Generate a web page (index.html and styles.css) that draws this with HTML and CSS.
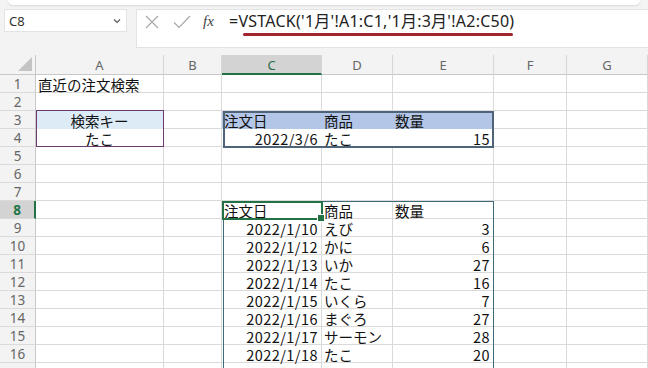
FILE: index.html
```html
<!DOCTYPE html>
<html lang="ja">
<head>
<meta charset="utf-8">
<title>VSTACK</title>
<link rel="stylesheet" href="styles.css">
</head>
<body>
<div class="topstrip"></div>
<div class="fbar">
  <div class="namebox">
    <span class="nbtext">C8</span>
    <svg class="chev" width="8" height="6" viewBox="0 0 8 6"><path d="M1 1.5 L4 4.5 L7 1.5" fill="none" stroke="#555" stroke-width="1.1"/></svg>
  </div>
  <div class="formula">
    <div class="fbtns">
      <svg width="14" height="14" viewBox="0 0 14 14"><path d="M1 1 L13 13 M13 1 L1 13" stroke="#a6a6a6" stroke-width="1.1" fill="none"/></svg>
      <svg width="18" height="14" viewBox="0 0 18 14"><path d="M1 7.5 L6 12.5 L17 1" stroke="#a6a6a6" stroke-width="1.1" fill="none"/></svg>
      <span class="fx">fx</span>
    </div>
    <div class="ftext">=VSTACK('1月'!A1:C1,'1月:3月'!A2:C50)</div>
    <div class="redline"></div>
  </div>
</div>
<div class="sheetwrap">
  <div class="sheet">
    <div class="corner"><span class="tri"></span></div>
    <div class="ch">A</div><div class="ch">B</div><div class="ch sel">C</div><div class="ch">D</div><div class="ch">E</div><div class="ch">F</div><div class="ch">G</div>

    <div class="rh">1</div><div class="c">直近の注文検索</div><div class="c"></div><div class="c"></div><div class="c"></div><div class="c"></div><div class="c"></div><div class="c"></div>
    <div class="rh">2</div><div class="c"></div><div class="c"></div><div class="c"></div><div class="c"></div><div class="c"></div><div class="c"></div><div class="c"></div>
    <div class="rh">3</div><div class="c ctr key">検索キー</div><div class="c"></div><div class="c th">注文日</div><div class="c th">商品</div><div class="c th">数量</div><div class="c"></div><div class="c"></div>
    <div class="rh">4</div><div class="c ctr">たこ</div><div class="c"></div><div class="c r tb">2022/3/6</div><div class="c tb">たこ</div><div class="c r tb">15</div><div class="c"></div><div class="c"></div>
    <div class="rh">5</div><div class="c"></div><div class="c"></div><div class="c"></div><div class="c"></div><div class="c"></div><div class="c"></div><div class="c"></div>
    <div class="rh">6</div><div class="c"></div><div class="c"></div><div class="c"></div><div class="c"></div><div class="c"></div><div class="c"></div><div class="c"></div>
    <div class="rh">7</div><div class="c"></div><div class="c"></div><div class="c"></div><div class="c"></div><div class="c"></div><div class="c"></div><div class="c"></div>
    <div class="rh sel">8</div><div class="c"></div><div class="c"></div><div class="c">注文日</div><div class="c">商品</div><div class="c">数量</div><div class="c"></div><div class="c"></div>
    <div class="rh">9</div><div class="c"></div><div class="c"></div><div class="c r">2022/1/10</div><div class="c">えび</div><div class="c r">3</div><div class="c"></div><div class="c"></div>
    <div class="rh">10</div><div class="c"></div><div class="c"></div><div class="c r">2022/1/12</div><div class="c">かに</div><div class="c r">6</div><div class="c"></div><div class="c"></div>
    <div class="rh">11</div><div class="c"></div><div class="c"></div><div class="c r">2022/1/13</div><div class="c">いか</div><div class="c r">27</div><div class="c"></div><div class="c"></div>
    <div class="rh">12</div><div class="c"></div><div class="c"></div><div class="c r">2022/1/14</div><div class="c">たこ</div><div class="c r">16</div><div class="c"></div><div class="c"></div>
    <div class="rh">13</div><div class="c"></div><div class="c"></div><div class="c r">2022/1/15</div><div class="c">いくら</div><div class="c r">7</div><div class="c"></div><div class="c"></div>
    <div class="rh">14</div><div class="c"></div><div class="c"></div><div class="c r">2022/1/16</div><div class="c">まぐろ</div><div class="c r">27</div><div class="c"></div><div class="c"></div>
    <div class="rh">15</div><div class="c"></div><div class="c"></div><div class="c r">2022/1/17</div><div class="c">サーモン</div><div class="c r">28</div><div class="c"></div><div class="c"></div>
    <div class="rh">16</div><div class="c"></div><div class="c"></div><div class="c r">2022/1/18</div><div class="c">たこ</div><div class="c r">20</div><div class="c"></div><div class="c"></div>
    <div class="rh"></div><div class="c"></div><div class="c"></div><div class="c"></div><div class="c"></div><div class="c"></div><div class="c"></div><div class="c"></div>
  </div>
  <div class="overlay">
    <div class="ov-key"></div>
    <div class="ov-table"></div>
    <div class="ov-spill"></div>
    <div class="ov-sel"></div>
  </div>
</div>
</body>
</html>
```

FILE: styles.css
```css
* { box-sizing: border-box; }
body {
  margin: 0;
  width: 648px;
  height: 368px;
  overflow: hidden;
  background: #f3f3f3;
  font-family: "Noto Sans", "Noto Sans CJK JP", sans-serif;
}
.topstrip {
  height: 5px;
  margin: 0 8px;
  background: #fff;
  border-radius: 0 0 6px 6px;
  box-shadow: 0 1px 2px rgba(0,0,0,0.12);
}
.fbar {
  height: 50px;
  display: flex;
  align-items: flex-start;
  padding: 4px 0 0 4px;
}
.namebox {
  width: 123px;
  height: 23px;
  background: #fff;
  border: 1px solid #e3e3e3;
  display: flex;
  align-items: center;
  justify-content: space-between;
  padding: 0 5px 0 4px;
}
.nbtext {
  font: 13px "Noto Sans", sans-serif;
  color: #333;
}
.formula {
  position: relative;
  margin-left: 9px;
  flex: 1;
  height: 39px;
  background: #fff;
  border: 1px solid #e3e3e3;
  border-right: none;
  display: flex;
  align-items: flex-start;
}
.fbtns {
  height: 23px;
  display: flex;
  align-items: center;
  gap: 14px;
  padding-left: 8px;
  width: 92px;
}
.fx {
  font: italic 15px "Liberation Serif", serif;
  color: #444;
  margin-left: -2px;
}
.ftext {
  font: 16px/23px "Noto Sans", "Noto Sans CJK JP", sans-serif;
  letter-spacing: 0.25px;
  color: #222;
  white-space: nowrap;
}
.redline {
  position: absolute;
  left: 106px;
  top: 23px;
  width: 270px;
  height: 3px;
  border-radius: 2px;
  background: #a3262e;
}
.sheetwrap {
  display: grid;
}
.sheet, .overlay {
  grid-area: 1 / 1;
  display: grid;
  grid-template-columns: 36px 128px 58px 100px 71px 101px 73px 81px;
  grid-template-rows: 20px repeat(17, 18px);
}
.sheet { background: #fff; }
.overlay { pointer-events: none; }
.corner {
  background: #f3f3f3;
  border-right: 1px solid #c8c8c8;
  border-bottom: 1px solid #c8c8c8;
  position: relative;
}
.tri {
  position: absolute;
  right: 3px;
  bottom: 3px;
  width: 0;
  height: 0;
  border-left: 14px solid transparent;
  border-bottom: 14px solid #c4c4c4;
}
.ch {
  background: #f3f3f3;
  border-right: 1px solid #d6d6d6;
  border-bottom: 1px solid #c8c8c8;
  text-align: center;
  font: 13px/20px "Noto Sans", sans-serif;
  color: #666;
}
.ch.sel {
  background: #d3d3d3;
  color: #2b6a48;
  border-bottom: 2px solid #217346;
}
.rh {
  background: #f3f3f3;
  border-right: 1px solid #c8c8c8;
  border-bottom: 1px solid #dadada;
  text-align: center;
  font: 13.5px/15px "Noto Sans", sans-serif;
  padding-top: 2px;
  color: #666;
}
.rh.sel {
  background: #d3d3d3;
  color: #217346;
  font-weight: bold;
  border-right: 2px solid #217346;
}
.c {
  border-right: 1px solid #dadada;
  border-bottom: 1px solid #dadada;
  font: 14.5px/15px "Noto Sans CJK JP", sans-serif;
  padding: 2px 2px 0;
  color: #111;
  white-space: nowrap;
}
.r { text-align: right; padding-right: 3px; letter-spacing: 0.45px; }
.ctr { text-align: center; }
.key { background: #ddebf7; border-bottom-color: #ddebf7; }
.th { background: #b4c6e7; border-color: #b4c6e7; }
.tb { border-right-color: #fff; }
.ov-key {
  grid-column: 2 / 3;
  grid-row: 4 / 6;
  border: 1px solid #6b3a6e;
  margin: -1px 0 0 0;
}
.ov-table {
  grid-column: 4 / 7;
  grid-row: 4 / 6;
  border: 2px solid #4f6479;
  margin: 0 0 -1px 1px;
}
.ov-spill {
  grid-column: 4 / 7;
  grid-row: 9 / 19;
  border: 1px solid #3f6a78;
  margin: 0 0 0 1px;
  border-bottom: none;
}
.ov-sel {
  grid-column: 4 / 5;
  grid-row: 9 / 10;
  border: 2px solid #217346;
  margin: 0 -1px -1px 0;
  position: relative;
}
.ov-sel::after {
  content: "";
  position: absolute;
  right: -4px;
  bottom: -4px;
  width: 6px;
  height: 6px;
  background: #217346;
  border: 1px solid #fff;
}
```
